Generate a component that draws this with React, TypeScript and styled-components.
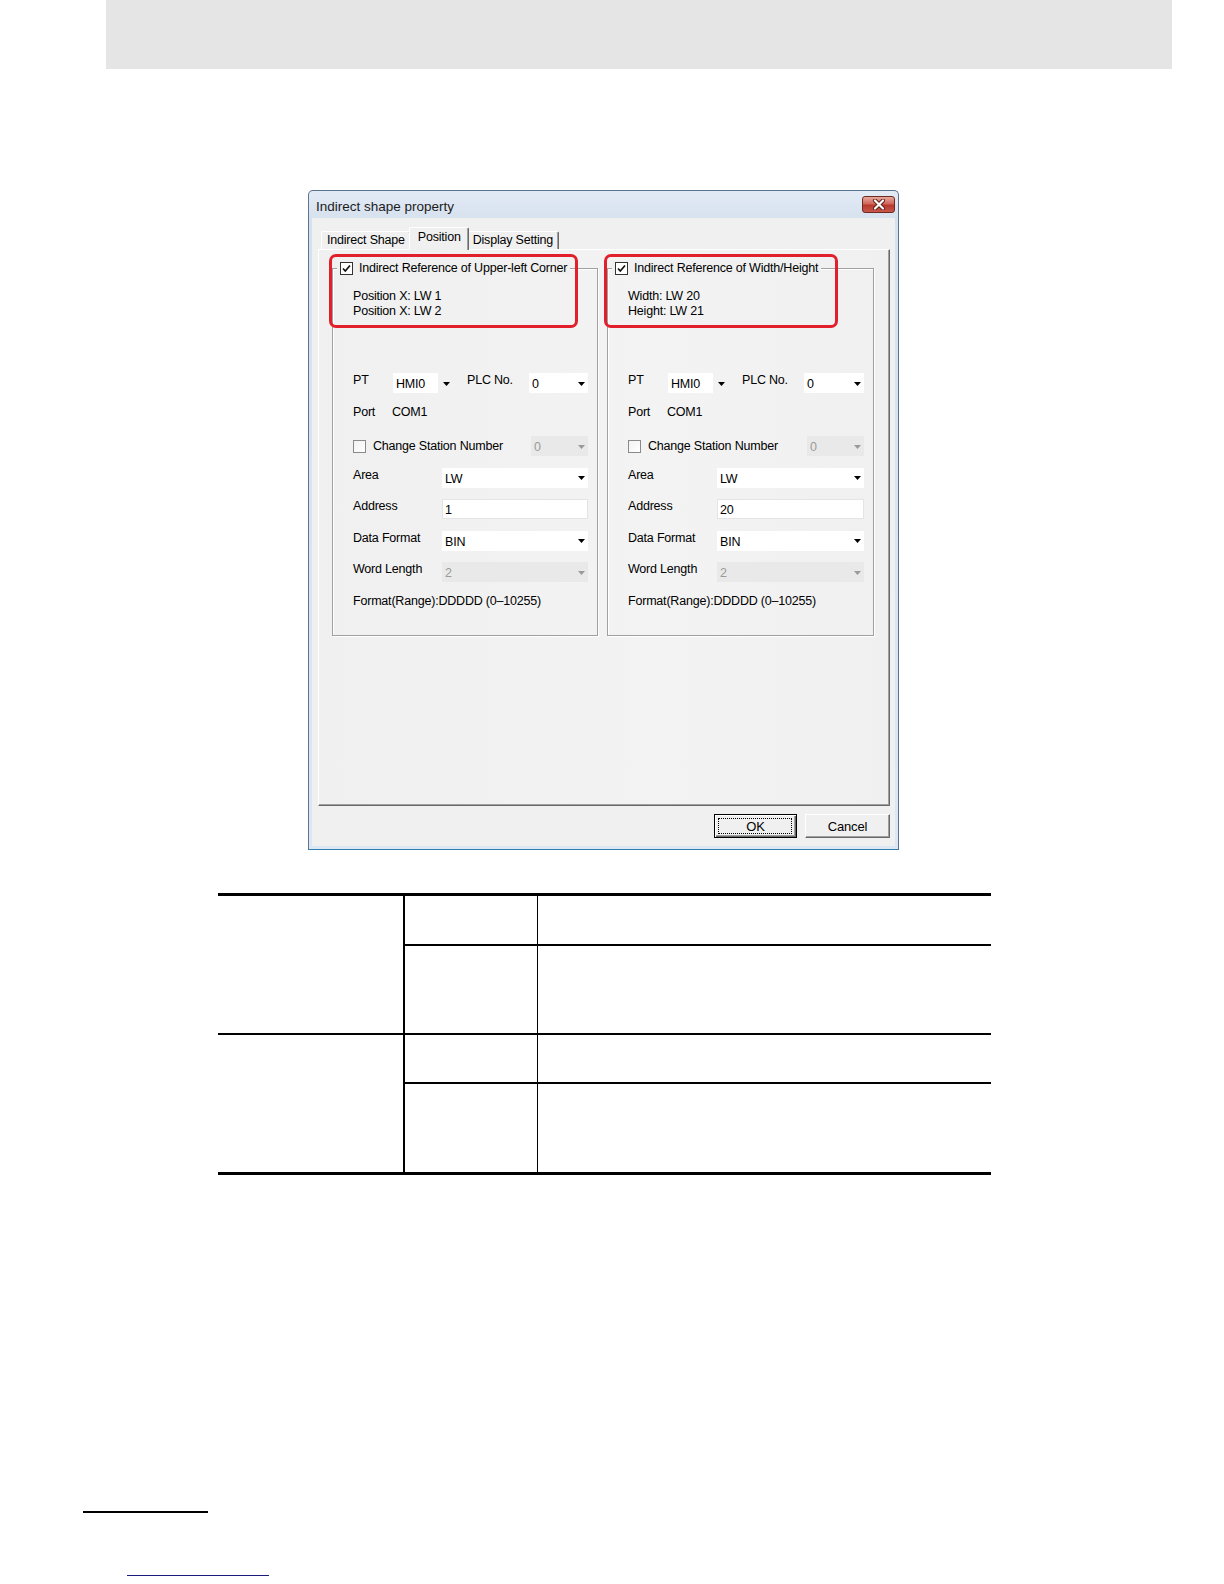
import React from 'react';
import styled, { createGlobalStyle } from 'styled-components';

const GlobalStyle = createGlobalStyle`
  html, body {
    margin: 0;
    padding: 0;
    background: #ffffff;
  }
  body {
    font-family: 'Liberation Sans', Arial, sans-serif;
    color: #000;
  }
`;

const Page = styled.div`
  width: 1224px;
  height: 1584px;
  overflow: hidden;
  display: flex;
  flex-direction: column;
  align-items: flex-start;
`;

const HeaderBar = styled.div`
  flex-shrink: 0;
  margin-left: 106px;
  width: 1066px;
  height: 69px;
  background: #e5e5e5;
`;

/* ---------- dialog window ---------- */

const Dialog = styled.div`
  flex-shrink: 0;
  margin: 121px 0 0 308px;
  width: 591px;
  box-sizing: border-box;
  border: 1px solid #5b7391;
  border-bottom-color: #2f7eae;
  border-radius: 5px 5px 0 0;
  background: linear-gradient(#e2eaf5, #d6e1ee 30px, #dde7f3);
  padding: 0 3px 3px 3px;
  display: flex;
  flex-direction: column;
  font-size: 12.5px;
  letter-spacing: -0.2px;
`;

const TitleBar = styled.div`
  height: 27px;
  display: flex;
  align-items: center;
  justify-content: space-between;
  padding: 0 0 0 4px;
`;

const TitleText = styled.span`
  padding-top: 3px;
  font-size: 13.5px;
  letter-spacing: 0;
  color: #1b1b1b;
`;

const CloseButton = styled.div`
  width: 33px;
  height: 17px;
  box-sizing: border-box;
  border: 1px solid #6b2a22;
  border-radius: 3px;
  background: linear-gradient(#e8a89d, #d0675c 45%, #b8392c 55%, #c8574a);
  display: flex;
  align-items: center;
  justify-content: center;
`;

const Client = styled.div`
  background: #f0f0f0;
  padding: 9px 5px 8px 6px;
  display: flex;
  flex-direction: column;
`;

const TabStrip = styled.div`
  height: 22px;
  display: flex;
  align-items: flex-end;
  padding-left: 3px;
  position: relative;
  z-index: 1;
`;

const Tab = styled.div<{ $active?: boolean }>`
  box-sizing: border-box;
  height: ${(p) => (p.$active ? '23px' : '18px')};
  margin: ${(p) => (p.$active ? '0 -2px -1px -2px' : '0')};
  padding: ${(p) => (p.$active ? '2px 7px 0 8px' : '1px 5px 0 5px')};
  background: #f0f0f0;
  border-top: 1px solid #ffffff;
  border-left: 1px solid #ffffff;
  border-right: 1px solid #696969;
  border-radius: 2px 2px 0 0;
  box-shadow: inset -1px 0 0 #a0a0a0;
  position: relative;
  z-index: ${(p) => (p.$active ? 2 : 1)};
  white-space: nowrap;
  line-height: 14px;
`;

const TabPanel = styled.div`
  height: 557px;
  box-sizing: border-box;
  border: 1px solid;
  border-color: #ffffff #696969 #696969 #ffffff;
  box-shadow: inset -1px -1px 0 #a0a0a0;
  background: linear-gradient(90deg, #f0f0f0, #f3f3f3 60%, #f0f0f0);
  padding: 11px 0 0 13px;
  display: flex;
  align-items: flex-start;
  gap: 9px;
`;

const ButtonRow = styled.div`
  margin-top: 8px;
  display: flex;
  justify-content: flex-end;
  gap: 8px;
`;

const DialogButton = styled.div<{ $default?: boolean; $width: number }>`
  position: relative;
  width: ${(p) => p.$width}px;
  height: 24px;
  box-sizing: border-box;
  background: #f0f0f0;
  border: 1px solid;
  border-color: ${(p) => (p.$default ? '#000 #000 #000 #000' : '#ffffff #696969 #696969 #ffffff')};
  box-shadow: ${(p) =>
    p.$default
      ? 'inset 1px 1px 0 #ffffff, inset -1px -1px 0 #696969, inset -2px -2px 0 #a0a0a0'
      : 'inset -1px -1px 0 #a0a0a0'};
  display: flex;
  align-items: center;
  justify-content: center;
  font-size: 13px;

  &::after {
    content: '';
    display: ${(p) => (p.$default ? 'block' : 'none')};
    position: absolute;
    inset: 3px 4px 3px 3px;
    border: 1px dotted #000;
  }
`;

/* ---------- group boxes ---------- */

const GroupWrap = styled.div<{ $width: number }>`
  position: relative;
  width: ${(p) => p.$width}px;
`;

const GroupBox = styled.fieldset`
  margin: 0;
  padding: 0;
  border: 1px solid #a0a0a0;
  box-shadow: 1px 1px 0 #ffffff, inset 1px 1px 0 #ffffff;
  min-width: 0;
`;

const GroupLegend = styled.legend`
  margin-left: 4px;
  padding: 0 3px;
  display: flex;
  align-items: center;
  gap: 6px;
  line-height: 14px;
  background: #f0f0f0;
  white-space: nowrap;
`;

const Highlight = styled.div<{ $width: number }>`
  position: absolute;
  left: -3px;
  top: -7px;
  width: ${(p) => p.$width}px;
  height: 74px;
  box-sizing: border-box;
  border: 3px solid #e2202b;
  border-radius: 7px;
  pointer-events: none;
`;

const GroupBody = styled.div`
  padding: 13.5px 9px 21.5px 20px;
`;

const InfoLines = styled.div`
  line-height: 15px;
`;

const FormRows = styled.div`
  margin-top: 54.5px;
  display: flex;
  flex-direction: column;
  gap: 11.5px;
`;

const Row = styled.div<{ $center?: boolean }>`
  height: 20px;
  display: flex;
  align-items: ${(p) => (p.$center ? 'center' : 'flex-start')};
`;

const Label = styled.span<{ $width?: number; $gap?: number }>`
  flex-shrink: 0;
  width: ${(p) => (p.$width ? `${p.$width}px` : 'auto')};
  margin-left: ${(p) => p.$gap || 0}px;
  line-height: 14px;
  white-space: nowrap;
`;

const CheckBox = styled.span<{ $checked?: boolean }>`
  flex-shrink: 0;
  width: 13px;
  height: 13px;
  box-sizing: border-box;
  border: 1px solid ${(p) => (p.$checked ? '#333333' : '#8a8a8a')};
  background: ${(p) => (p.$checked ? '#ffffff' : 'linear-gradient(135deg, #f2f2f2, #ffffff)')};
  display: flex;
  align-items: center;
  justify-content: center;
`;

const ComboBox = styled.div<{ $width?: number; $disabled?: boolean; $split?: boolean; $gap?: number }>`
  flex: ${(p) => (p.$width ? '0 0 auto' : '1')};
  width: ${(p) => (p.$width ? `${p.$width}px` : 'auto')};
  margin-left: ${(p) => (p.$gap === -1 ? 'auto' : `${p.$gap || 0}px`)};
  height: 20px;
  display: flex;
  background: ${(p) => (p.$disabled ? '#e9e9e9' : p.$split ? 'transparent' : '#ffffff')};
  color: ${(p) => (p.$disabled ? '#9a9a9a' : '#000')};
`;

const ComboValue = styled.span<{ $split?: boolean }>`
  flex: 1;
  padding: 4px 0 0 3px;
  line-height: 14px;
  background: ${(p) => (p.$split ? '#ffffff' : 'transparent')};
`;

const ComboArrow = styled.span<{ $split?: boolean }>`
  width: ${(p) => (p.$split ? 16 : 14)}px;
  display: flex;
  align-items: center;
  justify-content: center;
  padding-top: 1px;
`;

const TextBox = styled.div`
  flex: 1;
  height: 20px;
  box-sizing: border-box;
  border: 1px solid #e4e4e4;
  background: #ffffff;
  padding: 3px 0 0 2px;
  line-height: 14px;
`;

/* ---------- spec table ---------- */

const SpecTable = styled.div`
  flex-shrink: 0;
  margin: 43px 0 0 218px;
  width: 773px;
  display: grid;
  grid-template-columns: 187px 133px 1fr;
  grid-template-rows: 50px 89px 49px 88px;
  border-top: 3px solid #000;
  border-bottom: 3px solid #000;
`;

const GroupCell = styled.div<{ $last?: boolean }>`
  grid-row: span 2;
  border-right: 2px solid #000;
  border-bottom: ${(p) => (p.$last ? 'none' : '2px solid #000')};
`;

const ItemCell = styled.div<{ $line?: boolean }>`
  border-right: 1px solid #000;
  border-bottom: ${(p) => (p.$line ? '2px solid #000' : 'none')};
`;

const TextCell = styled.div<{ $line?: boolean }>`
  border-bottom: ${(p) => (p.$line ? '2px solid #000' : 'none')};
`;

const FooterRule = styled.div`
  flex-shrink: 0;
  margin: 336px 0 0 83px;
  width: 125px;
  height: 2px;
  background: #000;
`;

const FooterLink = styled.div`
  flex-shrink: 0;
  margin: 62px 0 0 127px;
  width: 142px;
  height: 1px;
  background: #1c1c7c;
`;

/* ---------- small drawings ---------- */

const Arrow = ({ disabled }: { disabled?: boolean }) => (
  <svg width="7" height="4" viewBox="0 0 7 4">
    <polygon points="0,0 7,0 3.5,4" fill={disabled ? '#9a9a9a' : '#000'} />
  </svg>
);

const Check = () => (
  <svg width="11" height="11" viewBox="0 0 11 11">
    <path d="M2 5.5 L4.3 8 L9 2.5" fill="none" stroke="#111" strokeWidth="1.7" />
  </svg>
);

const CloseGlyph = () => (
  <svg width="14" height="11" viewBox="0 0 14 11">
    <path d="M3 1.5 L11 9.5 M11 1.5 L3 9.5" stroke="#5e1d16" strokeWidth="4" strokeLinecap="round" />
    <path d="M3 1.5 L11 9.5 M11 1.5 L3 9.5" stroke="#ffffff" strokeWidth="2.2" strokeLinecap="round" />
  </svg>
);

type Combo = { value: string; width?: number; disabled?: boolean; split?: boolean; gap?: number };

const Dropdown = ({ value, width, disabled, split, gap }: Combo) => (
  <ComboBox $width={width} $disabled={disabled} $split={split} $gap={gap}>
    <ComboValue $split={split}>{value}</ComboValue>
    <ComboArrow $split={split}>
      <Arrow disabled={disabled} />
    </ComboArrow>
  </ComboBox>
);

type GroupProps = {
  width: number;
  markWidth: number;
  title: string;
  lines: string[];
  address: string;
};

const AddressGroup = ({ width, markWidth, title, lines, address }: GroupProps) => (
  <GroupWrap $width={width}>
    <GroupBox>
      <GroupLegend>
        <CheckBox $checked>
          <Check />
        </CheckBox>
        {title}
      </GroupLegend>
      <GroupBody>
        <InfoLines>
          {lines.map((l) => (
            <div key={l}>{l}</div>
          ))}
        </InfoLines>
        <FormRows>
          <Row>
            <Label $width={40}>PT</Label>
            <Dropdown value="HMI0" width={61} split />
            <Label $width={62} $gap={13}>
              PLC No.
            </Label>
            <Dropdown value="0" />
          </Row>
          <Row>
            <Label $width={39}>Port</Label>
            <Label>COM1</Label>
          </Row>
          <Row $center>
            <CheckBox />
            <Label $gap={7}>Change Station Number</Label>
            <Dropdown value="0" width={57} disabled gap={-1} />
          </Row>
          <Row>
            <Label $width={89}>Area</Label>
            <Dropdown value="LW" />
          </Row>
          <Row>
            <Label $width={89}>Address</Label>
            <TextBox>{address}</TextBox>
          </Row>
          <Row>
            <Label $width={89}>Data Format</Label>
            <Dropdown value="BIN" />
          </Row>
          <Row>
            <Label $width={89}>Word Length</Label>
            <Dropdown value="2" disabled />
          </Row>
          <Row>
            <Label>Format(Range):DDDDD (0–10255)</Label>
          </Row>
        </FormRows>
      </GroupBody>
    </GroupBox>
    <Highlight $width={markWidth} />
  </GroupWrap>
);

const App = () => {
  return (
    <Page>
      <GlobalStyle />
      <HeaderBar />

      <Dialog>
        <TitleBar>
          <TitleText>Indirect shape property</TitleText>
          <CloseButton>
            <CloseGlyph />
          </CloseButton>
        </TitleBar>
        <Client>
          <TabStrip>
            <Tab>Indirect Shape</Tab>
            <Tab $active>Position</Tab>
            <Tab>Display Setting</Tab>
          </TabStrip>
          <TabPanel>
            <AddressGroup
              width={266}
              markWidth={249}
              title="Indirect Reference of Upper-left Corner"
              lines={['Position X: LW 1', 'Position X: LW 2']}
              address="1"
            />
            <AddressGroup
              width={267}
              markWidth={234}
              title="Indirect Reference of Width/Height"
              lines={['Width: LW 20', 'Height: LW 21']}
              address="20"
            />
          </TabPanel>
          <ButtonRow>
            <DialogButton $default $width={83}>
              OK
            </DialogButton>
            <DialogButton $width={85}>Cancel</DialogButton>
          </ButtonRow>
        </Client>
      </Dialog>

      <SpecTable>
        <GroupCell />
        <ItemCell $line />
        <TextCell $line />
        <ItemCell $line />
        <TextCell $line />
        <GroupCell $last />
        <ItemCell $line />
        <TextCell $line />
        <ItemCell />
        <TextCell />
      </SpecTable>

      <FooterRule />
      <FooterLink />
    </Page>
  );
};

export default App;
